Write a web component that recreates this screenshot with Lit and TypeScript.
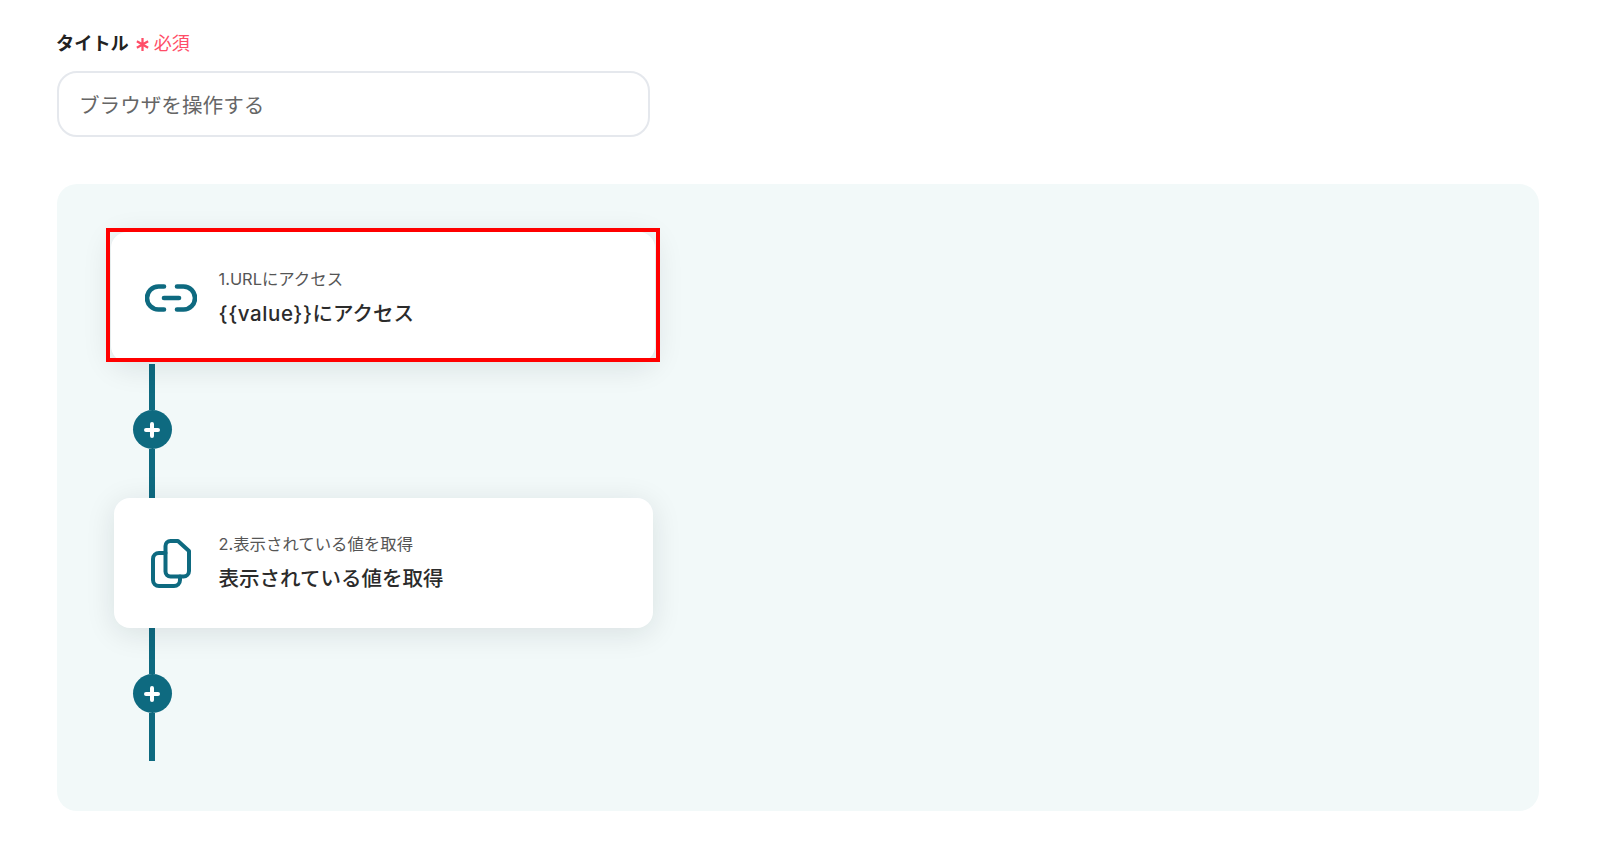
import { LitElement, html, css, svg } from 'lit';
import { customElement } from 'lit/decorators.js';

const linkIcon = svg`
  <path d="M19 2.5H13.5a11.5 11.5 0 0 0 0 23H19" />
  <path d="M32 2.5H38.5a11.5 11.5 0 0 1 0 23H32" />
  <path d="M19 14H34" />
`;

const copyIcon = svg`
  <path d="M19.5 2H27L38 12V32a5.5 5.5 0 0 1-5.5 5.5H19.5a5 5 0 0 1-5-5V7a5 5 0 0 1 5-5z" />
  <path d="M14.5 14H8a6 6 0 0 0-6 6V41a6 6 0 0 0 6 6H23a6 6 0 0 0 6-6V37.5" />
`;

@customElement('app-root')
export class AppRoot extends LitElement {
  static styles = css`
    :host {
      display: block;
      height: 852px;
      box-sizing: border-box;
      padding: 29px 61px 0 57px;
      background: #fff;
      font-family: Inter, "Noto Sans CJK JP", sans-serif;
      color: #2b2b2b;
      overflow: hidden;
    }

    .label {
      display: flex;
      align-items: center;
      height: 26px;
      margin-left: -1px;
      font-size: 18.2px;
      font-weight: 600;
      color: #222;
    }

    .required {
      display: flex;
      align-items: center;
      margin-left: 6px;
      font-size: 18px;
      font-weight: 400;
      color: #ff4d67;
    }

    .required svg {
      width: 15px;
      height: 15px;
      margin: 5px 4px 0 0;
      stroke: #ff4d67;
      stroke-width: 2.4;
    }

    .input {
      display: flex;
      align-items: center;
      box-sizing: border-box;
      width: 593px;
      height: 66px;
      margin-top: 16px;
      padding-left: 20px;
      border: 2px solid #e5e8ed;
      border-radius: 20px;
      font-size: 20.6px;
      color: #666;
    }

    .panel {
      box-sizing: border-box;
      height: 627px;
      margin-top: 47px;
      padding: 48px 0 0 57px;
      border-radius: 20px;
      background: #f2f9f9;
    }

    .card {
      display: flex;
      align-items: center;
      box-sizing: border-box;
      position: relative;
      width: 539px;
      height: 130px;
      border-radius: 16px;
      background: #fff;
      box-shadow: 0 5px 30px rgba(20, 30, 35, 0.11);
    }

    .card.selected {
      width: 544px;
      margin-left: -3px;
      padding: 2px 0 0 3px;
    }

    .selected-frame {
      position: absolute;
      left: -5px;
      top: -4px;
      width: 553.5px;
      height: 134px;
      box-sizing: border-box;
      border: 4.5px solid #ff0000;
      pointer-events: none;
    }

    .icon {
      display: flex;
      justify-content: center;
      flex: none;
      box-sizing: border-box;
      width: 104.5px;
      padding-left: 8.5px;
    }

    .icon svg {
      display: block;
      fill: none;
      stroke: #0e6a80;
      stroke-linecap: round;
      stroke-linejoin: round;
    }

    .text {
      display: flex;
      flex-direction: column;
      gap: 8px;
    }

    .name {
      font-size: 16.4px;
      line-height: 24px;
      color: #555;
    }

    .title {
      font-size: 20.5px;
      line-height: 30px;
      font-weight: 500;
      color: #2b2b2b;
    }

    .value {
      letter-spacing: 0.6px;
    }

    .connector {
      display: flex;
      flex-direction: column;
      align-items: center;
      width: 40px;
      margin-left: 18px;
    }

    .connector.first {
      height: 134px;
      margin-top: 2px;
    }

    .connector.last {
      height: 133px;
    }

    .line {
      flex: 1;
      width: 6px;
      background: #0e6a80;
    }

    .line.top {
      flex: none;
      height: 46px;
    }

    .add {
      display: flex;
      align-items: center;
      justify-content: center;
      flex: none;
      width: 39px;
      height: 39px;
      border-radius: 50%;
      background: #0e6a80;
    }

    .add svg {
      width: 16px;
      height: 16px;
      stroke: #fff;
      stroke-width: 4;
      stroke-linecap: round;
    }
  `;

  private connector(pos: string) {
    return html`
      <div class="connector ${pos}">
        <div class="line top"></div>
        <div class="add">
          <svg viewBox="0 0 16 16"><path d="M8 2V14M2 8H14" /></svg>
        </div>
        <div class="line"></div>
      </div>
    `;
  }

  render() {
    return html`
      <div class="label">
        タイトル
        <span class="required">
          <svg viewBox="0 0 16 16"><path d="M8 1V15M2 4.5L14 11.5M14 4.5L2 11.5" /></svg>
          必須
        </span>
      </div>
      <div class="input">ブラウザを操作する</div>

      <div class="panel">
        <div class="card selected">
          <div class="icon">
            <svg width="52" height="28" viewBox="0 0 52 28" stroke-width="4.6">${linkIcon}</svg>
          </div>
          <div class="text">
            <div class="name">1.URLにアクセス</div>
            <div class="title"><span class="value">{{value}}</span>にアクセス</div>
          </div>
          <div class="selected-frame"></div>
        </div>
        ${this.connector('first')}
        <div class="card">
          <div class="icon">
            <svg width="40" height="49" viewBox="0 0 40 49" stroke-width="4">${copyIcon}</svg>
          </div>
          <div class="text">
            <div class="name">2.表示されている値を取得</div>
            <div class="title">表示されている値を取得</div>
          </div>
        </div>
        ${this.connector('last')}
      </div>
    `;
  }
}
